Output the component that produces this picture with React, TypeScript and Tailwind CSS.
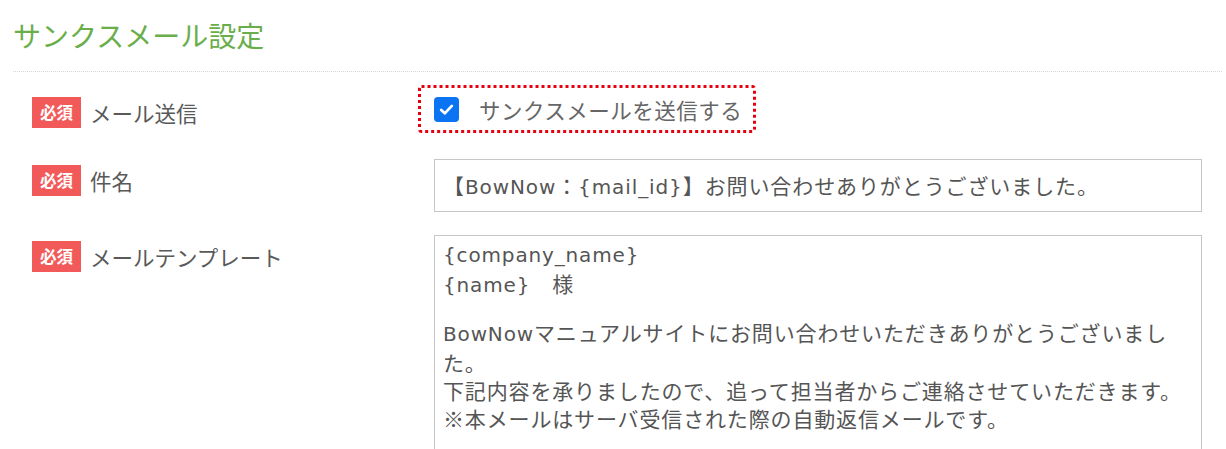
import React from "react";

const jp = { fontFamily: '"Noto Sans CJK JP", "Noto Sans", sans-serif' };

function Lat({ children }: { children: React.ReactNode }) {
  return <span className="font-['DejaVu_Sans'] text-[20px]">{children}</span>;
}

function Badge() {
  return (
    <div className="flex h-[31px] w-[49px] shrink-0 items-center justify-center bg-[#f25a5a] text-[16.5px] font-bold leading-none text-white">
      必須
    </div>
  );
}

function Label({ text }: { text: string }) {
  return (
    <div className="flex h-[31px] items-center">
      <Badge />
      <span className="ml-[9px] text-[21.5px] leading-[31px] text-[#595959]">{text}</span>
    </div>
  );
}

export default function App() {
  return (
    <div
      className="h-[449px] w-[1226px] overflow-hidden bg-white pl-[13px] pr-[4px] pt-[18px]"
      style={jp}
    >
      <h2 className="h-[34px] text-[28px] font-normal leading-[34px] text-[#6aae4c]">
        サンクスメール設定
      </h2>
      <div className="mt-[19px] border-t border-dotted border-[#d6d6d6]" />

      <div className="pl-[19px]">
        {/* Row 1 */}
        <div className="flex h-[87px] items-start">
          <div className="mt-[25px] w-[402px] shrink-0">
            <Label text="メール送信" />
          </div>
          <div className="relative">
            <div className="mt-[25px] flex h-[25px] items-center">
              <div className="flex h-[25px] w-[25px] items-center justify-center rounded-[4px] bg-[#0b74f2]">
                <svg width="17" height="17" viewBox="0 0 16 16" fill="none">
                  <path
                    d="M3 8.4 L6.4 11.6 L13 4.6"
                    stroke="white"
                    strokeWidth="2.6"
                    strokeLinecap="round"
                    strokeLinejoin="round"
                  />
                </svg>
              </div>
              <span className="ml-[20px] text-[21.5px] leading-[25px] tracking-[0.5px] text-[#666666]">
                サンクスメールを送信する
              </span>
            </div>
            <svg
              className="pointer-events-none absolute left-[-16px] top-[13px]"
              width="338"
              height="48"
              viewBox="0 0 338 48"
            >
              <rect
                x="1.5"
                y="1.5"
                width="335"
                height="45"
                rx="2"
                fill="none"
                stroke="#e8000f"
                strokeWidth="3"
                strokeDasharray="3 3"
              />
            </svg>
          </div>
        </div>

        {/* Row 2 */}
        <div className="flex items-start">
          <div className="mt-[6px] w-[402px] shrink-0">
            <Label text="件名" />
          </div>
          <div className="flex h-[53px] w-[768px] items-center border border-[#c6c6c6] pl-[8px] text-[21px] tracking-[0.9px] text-[#555555]">
            <span className="whitespace-nowrap">
              【<Lat>BowNow</Lat>：<Lat>{"{mail_id}"}</Lat>】お問い合わせありがとうございました。
            </span>
          </div>
        </div>

        {/* Row 3 */}
        <div className="mt-[23px] flex items-start">
          <div className="mt-[6px] w-[402px] shrink-0">
            <Label text="メールテンプレート" />
          </div>
          <div className="h-[260px] w-[768px] border border-[#c6c6c6] pl-[8px] pt-[3px] text-[21px] leading-[28px] tracking-[0.85px] text-[#555555]">
            <div className="whitespace-nowrap">
              <Lat>{"{company_name}"}</Lat>
            </div>
            <div className="whitespace-nowrap">
              <Lat>{"{name}"}</Lat>　様
            </div>
            <div className="h-[19px]" />
            <div className="whitespace-nowrap">
              <Lat>BowNow</Lat>マニュアルサイトにお問い合わせいただきありがとうございまし
            </div>
            <div className="whitespace-nowrap">た。</div>
            <div className="whitespace-nowrap">
              下記内容を承りましたので、追って担当者からご連絡させていただきます。
            </div>
            <div className="whitespace-nowrap">※本メールはサーバ受信された際の自動返信メールです。</div>
          </div>
        </div>
      </div>
    </div>
  );
}
